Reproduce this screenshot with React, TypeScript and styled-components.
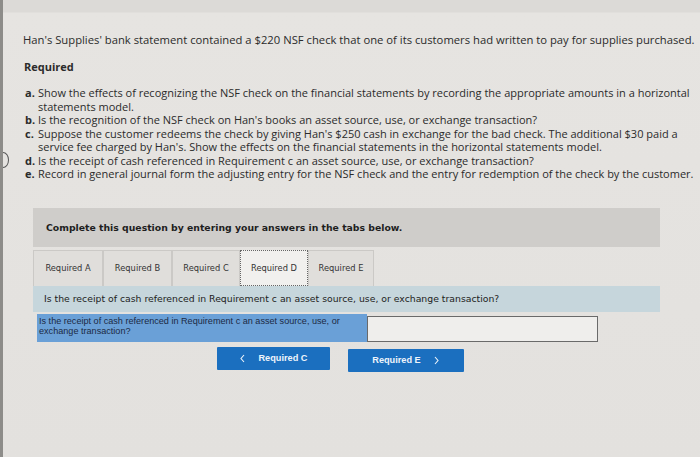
import React from 'react'
import styled, { createGlobalStyle } from 'styled-components'

const GlobalStyle = createGlobalStyle`
    html, body {
        margin: 0;
        padding: 0;
        background: #e3e1de;
    }
`;

const Page = styled.div`
    width: 700px;
    height: 457px;
    box-sizing: border-box;
    border-left: 3px solid #8d8c89;
    background: linear-gradient(180deg, #dcdad7 0px, #dcdad7 12px, #e6e4e1 13px, #e3e1de 100%);
    position: relative;
    overflow: hidden;
    font-family: "Open Sans", "Liberation Sans", sans-serif;
    color: #2b2b2b;
`;

const Intro = styled.div`
    padding: 32px 0 0 20px;
    font-size: 11.25px;
    white-space: nowrap;
`;

const Heading = styled.div`
    margin: 12px 0 0 21px;
    font-size: 11px;
    font-weight: 700;
`;

const List = styled.ul`
    list-style: none;
    margin: 12px 0 0 22px;
    padding: 0;
    font-size: 11px;
    line-height: 13.5px;
`;

const Item = styled.li`
    display: flex;
    white-space: nowrap;
`;

const Letter = styled.b`
    width: 13px;
    flex: none;
`;

const Bullet = styled.span`
    position: absolute;
    left: -6px;
    top: 152px;
    width: 10px;
    height: 14px;
    border: 1px solid #555;
    border-radius: 50%;
`;

const Panel = styled.div`
    margin: 27px 0 0 30px;
    width: 627px;
`;

const Banner = styled.div`
    height: 39px;
    background: #cfcdca;
    display: flex;
    align-items: center;
    padding-left: 13px;
    font-family: "DejaVu Sans", Verdana, sans-serif;
    font-size: 9.3px;
    font-weight: 700;
    color: #1e1e1e;
`;

const Tabs = styled.div`
    display: flex;
    margin-top: 3px;
    height: 36px;
`;

const Tab = styled.div<{ $active?: boolean; $w: number }>`
    width: ${p => p.$w}px;
    box-sizing: border-box;
    display: flex;
    align-items: center;
    justify-content: center;
    font-family: "DejaVu Sans", Verdana, sans-serif;
    font-size: 8.3px;
    color: #333;
    background: ${p => (p.$active ? '#f1f0ee' : '#e0dedb')};
    border: ${p => (p.$active ? '1px dotted #666' : '1px solid #cbc9c6')};
    border-bottom: ${p => (p.$active ? '1px dotted #666' : 'none')};
`;

const QuestionBar = styled.div`
    height: 26px;
    background: #c6d6dc;
    display: flex;
    align-items: center;
    padding-left: 11px;
    font-family: "DejaVu Sans", Verdana, sans-serif;
    font-size: 9.3px;
    color: #222;
`;

const AnswerRow = styled.div`
    display: flex;
    margin: 2px 0 0 4px;
    height: 28px;
`;

const AnswerLabel = styled.div`
    width: 330px;
    background: #6aa0d7;
    padding: 2px 2px;
    box-sizing: border-box;
    font-family: "Liberation Sans", Arial, sans-serif;
    font-size: 9.1px;
    line-height: 10px;
    color: #1c2a44;
`;

const AnswerInput = styled.div`
    width: 231px;
    height: 26px;
    margin-top: 2px;
    box-sizing: border-box;
    background: #efeeec;
    border: 1.5px solid #6a6a6a;
`;

const Nav = styled.div`
    display: flex;
    gap: 18px;
    margin: 5px 0 0 184px;
`;

const NavButton = styled.div<{ $dy?: number }>`
    width: ${p => (p.$dy ? 116 : 113)}px;
    height: 23px;
    margin-top: ${p => p.$dy ?? 0}px;
    background: #1b6fbf;
    border-radius: 1px;
    display: flex;
    align-items: center;
    justify-content: center;
    gap: 12px;
    font-family: "Liberation Sans", Arial, sans-serif;
    font-size: 9.2px;
    font-weight: 700;
    color: #eef4fb;
`;

function Chevron({ dir }: { dir: 'left' | 'right' }) {
    const d = dir === 'left' ? 'M5 1 L2 4.5 L5 8' : 'M2 1 L5 4.5 L2 8'
    return (
        <svg width="7" height="9" viewBox="0 0 7 9">
            <path d={d} fill="none" stroke="#eef4fb" strokeWidth="1.1" />
        </svg>
    )
}

export default function App() {
    const items: [string, string[]][] = [
        ['a.', [
            'Show the effects of recognizing the NSF check on the financial statements by recording the appropriate amounts in a horizontal',
            'statements model.',
        ]],
        ['b.', ['Is the recognition of the NSF check on Han\'s books an asset source, use, or exchange transaction?']],
        ['c.', [
            'Suppose the customer redeems the check by giving Han\'s $250 cash in exchange for the bad check. The additional $30 paid a',
            'service fee charged by Han\'s. Show the effects on the financial statements in the horizontal statements model.',
        ]],
        ['d.', ['Is the receipt of cash referenced in Requirement c an asset source, use, or exchange transaction?']],
        ['e.', ['Record in general journal form the adjusting entry for the NSF check and the entry for redemption of the check by the customer.']],
    ]

    const tabs = [
        { label: 'Required A', w: 70 },
        { label: 'Required B', w: 69 },
        { label: 'Required C', w: 68 },
        { label: 'Required D', w: 68, active: true },
        { label: 'Required E', w: 66 },
    ]

    return (
        <>
            <GlobalStyle />
            <Page>
                <Bullet />
                <Intro>
                    Han's Supplies' bank statement contained a $220 NSF check that one of its customers had written to pay for supplies purchased.
                </Intro>
                <Heading>Required</Heading>
                <List>
                    {items.map(([letter, lines]) => (
                        <Item key={letter}>
                            <Letter>{letter}</Letter>
                            <div>
                                {lines.map((l, i) => <div key={i}>{l}</div>)}
                            </div>
                        </Item>
                    ))}
                </List>

                <Panel>
                    <Banner>Complete this question by entering your answers in the tabs below.</Banner>
                    <Tabs>
                        {tabs.map(t => (
                            <Tab key={t.label} $w={t.w} $active={t.active}>{t.label}</Tab>
                        ))}
                    </Tabs>
                    <QuestionBar>
                        Is the receipt of cash referenced in Requirement c an asset source, use, or exchange transaction?
                    </QuestionBar>
                    <AnswerRow>
                        <AnswerLabel>
                            Is the receipt of cash referenced in Requirement c an asset source, use, or exchange transaction?
                        </AnswerLabel>
                        <AnswerInput />
                    </AnswerRow>
                    <Nav>
                        <NavButton><Chevron dir="left" />Required C</NavButton>
                        <NavButton $dy={2}>Required E<Chevron dir="right" /></NavButton>
                    </Nav>
                </Panel>
            </Page>
        </>
    )
}
